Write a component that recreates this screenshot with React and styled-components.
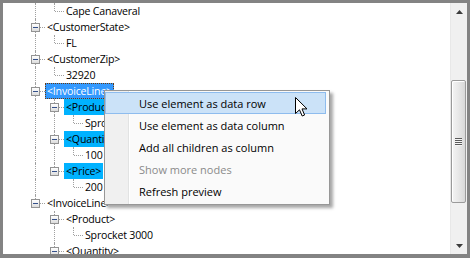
import React from 'react'
import styled, { createGlobalStyle, css } from 'styled-components'

const GlobalStyle = createGlobalStyle`
    body {
        margin: 0;
    }
    * {
        box-sizing: border-box;
    }
`

const Frame = styled.div`
    position: relative;
    width: 470px;
    height: 258px;
    border: 3px solid #838383;
    border-bottom-width: 4px;
    background: #fff;
    display: flex;
    overflow: hidden;
    font-family: "Open Sans", sans-serif;
    font-size: 11px;
    color: #000;
`

const Tree = styled.div`
    flex: 1;
    overflow: hidden;
    font-size: 10.6px;
    letter-spacing: -0.2px;
`

const Row = styled.div`
    display: flex;
    align-items: center;
    height: 16px;
    padding-left: 23px;
`

const dots = '1px dotted #a0a0a0'

const Guide = styled.span`
    position: relative;
    flex: none;
    width: 19px;
    height: 16px;

    &::before {
        content: '';
        position: absolute;
        left: 9px;
        top: 0;
        height: ${p => p.$v === 'full' ? '16px' : p.$v === 'half' ? '8px' : '0'};
        border-left: ${p => p.$v === 'none' ? 'none' : dots};
    }

    &::after {
        content: '';
        position: absolute;
        left: 10px;
        top: 8px;
        width: 9px;
        border-top: ${p => p.$h ? dots : 'none'};
    }
`

const ExpandBox = styled.span`
    position: absolute;
    left: 5px;
    top: 4px;
    width: 9px;
    height: 9px;
    z-index: 1;
    border: 1px solid #939393;
    background: linear-gradient(to bottom, #fff, #dcdcdc);

    &::after {
        content: '';
        position: absolute;
        left: 1px;
        top: 3px;
        width: 5px;
        height: 1px;
        background: #34508a;
    }
`

const Label = styled.span`
    height: 16px;
    line-height: 16px;
    padding: 0 2px;
    white-space: nowrap;

    ${p => p.$hl === 'sel' && css`
        background: #3399ff;
        color: #fff;
        outline: 1px dotted #6a3a10;
        outline-offset: -1px;
    `}
    ${p => p.$hl === 'sub' && css`
        background: #00b2ff;
    `}
`

const Scroll = styled.div`
    flex: none;
    width: 17px;
    display: flex;
    flex-direction: column;
    background: #f0f0f0;
    border-left: 1px solid #e8e8e8;
`

const ArrowBtn = styled.div`
    height: 17px;
    display: flex;
    align-items: center;
    justify-content: center;
    flex: none;
`

const Track = styled.div`
    flex: 1;
    padding-top: 60px;
`

const Thumb = styled.div`
    height: 123px;
    margin-right: 1px;
    border: 1px solid #9a9a9a;
    border-radius: 2px;
    background: linear-gradient(to right, #f4f4f4 0%, #e9e9e9 45%, #d8d8d8 100%);
    box-shadow: inset 1px 1px 0 #fff;
    display: flex;
    align-items: center;
    justify-content: center;
`

const Grip = styled.div`
    width: 7px;
    height: 8px;
    background: repeating-linear-gradient(to bottom, #5a5a5a 0 1px, #f5f5f5 1px 2px);
`

const Menu = styled.div`
    position: absolute;
    left: 101px;
    top: 87px;
    width: 226px;
    padding: 1px 3px 2px 0;
    border: 1px solid #979797;
    background: linear-gradient(to right, #f0f0f0 0 23px, #e2e3e3 23px 24px, #fff 24px 25px, #fafafa 25px);
    box-shadow: 3px 3px 3px rgba(0, 0, 0, 0.35);
    z-index: 5;
`

const MenuItem = styled.div`
    height: 22px;
    line-height: 21px;
    padding-left: 33px;
    border: 1px solid transparent;
    white-space: nowrap;
    color: ${p => p.$disabled ? '#8a8a8a' : '#000'};

    ${p => p.$active && css`
        background: #cbe2f8;
        border-color: #8ebcee;
    `}
`

const Cursor = styled.svg`
    position: absolute;
    left: 292px;
    top: 94px;
    z-index: 6;
`

const rows = [
    { t: 'Cape Canaveral', g: ['pass', 'ell'] },
    { t: '<CustomerState>', g: ['tee'], box: true },
    { t: 'FL', g: ['pass', 'ell'] },
    { t: '<CustomerZip>', g: ['tee'], box: true },
    { t: '32920', g: ['pass', 'ell'] },
    { t: '<InvoiceLine>', g: ['tee'], box: true, hl: 'sel' },
    { t: '<Product>', g: ['pass', 'tee'], box: true, hl: 'sub' },
    { t: 'Sprocket 3000', g: ['pass', 'pass', 'ell'] },
    { t: '<Quantity>', g: ['pass', 'tee'], box: true, hl: 'sub' },
    { t: '100', g: ['pass', 'pass', 'ell'] },
    { t: '<Price>', g: ['pass', 'ell'], box: true, hl: 'sub' },
    { t: '200', g: ['pass', 'none', 'ell'] },
    { t: '<InvoiceLine>', g: ['ell'], box: true },
    { t: '<Product>', g: ['none', 'tee'], box: true },
    { t: 'Sprocket 3000', g: ['none', 'pass', 'ell'] },
    { t: '<Quantity>', g: ['none', 'tee'], box: true },
]

const menuItems = [
    { t: 'Use element as data row', active: true },
    { t: 'Use element as data column' },
    { t: 'Add all children as column' },
    { t: 'Show more nodes', disabled: true },
    { t: 'Refresh preview' },
]

const guideLine = (kind) => {
    if (kind === 'pass' || kind === 'tee') return 'full'
    if (kind === 'ell') return 'half'
    return 'none'
}

const TreeRow = ({ row }) => (
    <Row>
        {row.g.map((kind, i) => {
            const own = i === row.g.length - 1
            return (
                <Guide key={i} $v={guideLine(kind)} $h={own}>
                    {own && row.box && <ExpandBox />}
                </Guide>
            )
        })}
        <Label $hl={row.hl}>{row.t}</Label>
    </Row>
)

const App = () => {
    return (
        <>
            <GlobalStyle />
            <Frame>
                <Tree>
                    {rows.map((row, i) => <TreeRow key={i} row={row} />)}
                </Tree>
                <Scroll>
                    <ArrowBtn>
                        <svg width="7" height="4" viewBox="0 0 7 4"><path d="M3.5 0 L7 4 L0 4 Z" fill="#3c3c3c" /></svg>
                    </ArrowBtn>
                    <Track>
                        <Thumb><Grip /></Thumb>
                    </Track>
                    <ArrowBtn>
                        <svg width="7" height="4" viewBox="0 0 7 4"><path d="M0 0 L7 0 L3.5 4 Z" fill="#3c3c3c" /></svg>
                    </ArrowBtn>
                </Scroll>

                <Menu>
                    {menuItems.map((m, i) => (
                        <MenuItem key={i} $active={m.active} $disabled={m.disabled}>{m.t}</MenuItem>
                    ))}
                </Menu>

                <Cursor width="14" height="21" viewBox="0 0 14 21">
                    <path d="M0.5 0.5 L0.5 16.5 L4.5 12.8 L7.2 19 L9.6 18 L7 11.9 L12 11.9 Z" fill="#fff" stroke="#000" strokeWidth="1" strokeLinejoin="miter" />
                </Cursor>
            </Frame>
        </>
    )
}

export default App
